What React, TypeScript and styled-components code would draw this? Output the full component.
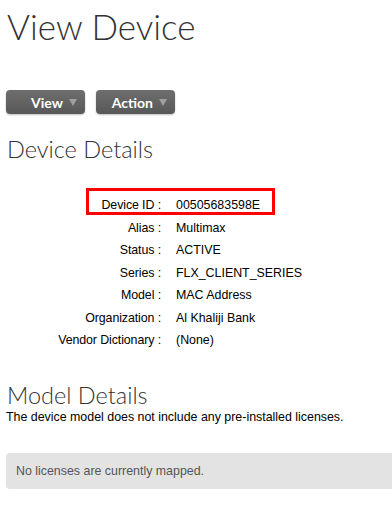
import React from 'react'
import styled, { createGlobalStyle } from 'styled-components'

const GlobalStyle = createGlobalStyle`
  html, body {
    margin: 0;
    padding: 0;
    background: #ffffff;
  }
  body {
    font-family: 'Liberation Sans', Arial, sans-serif;
    font-size: 12.4px;
    color: #000;
  }
`

const Page = styled.div`
  width: 392px;
  height: 507px;
  overflow: hidden;
  padding: 0 0 0 6px;
  box-sizing: border-box;
`

const PageTitle = styled.h1`
  margin: 0;
  padding: 4px 0 0 1px;
  font-family: Lato, sans-serif;
  font-weight: 300;
  font-size: 35px;
  line-height: 44px;
  color: #333;
`

const Toolbar = styled.div`
  display: flex;
  gap: 11px;
  margin-top: 42px;
`

const MenuButton = styled.button<{ $width: number }>`
  display: flex;
  align-items: center;
  justify-content: flex-end;
  gap: 6px;
  width: ${(p) => p.$width}px;
  height: 24px;
  padding: 0 8px 0 0;
  border: none;
  border-radius: 4px;
  background: linear-gradient(#6e6e6e, #585858);
  box-shadow: 0 1px 2px rgba(0, 0, 0, 0.25);
  color: #fff;
  font-family: Lato, sans-serif;
  font-weight: 700;
  font-size: 14px;
  cursor: pointer;
`

const Caret = styled.span`
  width: 0;
  height: 0;
  border-left: 4px solid transparent;
  border-right: 4px solid transparent;
  border-top: 7px solid #a0a0a0;
`

const SectionTitle = styled.h2<{ $top: number }>`
  margin: ${(p) => p.$top}px 0 0 1px;
  font-family: Lato, sans-serif;
  font-weight: 300;
  font-size: 23.5px;
  line-height: 30px;
  color: #333;
`

const DetailsTable = styled.div`
  position: relative;
  display: grid;
  grid-template-columns: 155px auto;
  column-gap: 15px;
  margin-top: 30px;
  line-height: 22.5px;
`

const Label = styled.div`
  text-align: right;
  white-space: nowrap;
  letter-spacing: -0.1px;
`

const Value = styled.div`
  white-space: nowrap;
`

const Highlight = styled.div`
  position: absolute;
  left: 80px;
  top: -6px;
  width: 189px;
  height: 27px;
  border: 3px solid #ff0000;
  box-sizing: border-box;
`

const Note = styled.p`
  margin: 0;
  line-height: 14px;
`

const EmptyState = styled.div`
  margin-top: 29px;
  height: 36px;
  display: flex;
  align-items: center;
  padding-left: 10px;
  background: #e3e3e3;
  border-radius: 4px 0 0 4px;
  color: #555;
`

const rows: [string, string][] = [
  ['Device ID', '00505683598E'],
  ['Alias', 'Multimax'],
  ['Status', 'ACTIVE'],
  ['Series', 'FLX_CLIENT_SERIES'],
  ['Model', 'MAC Address'],
  ['Organization', 'Al Khaliji Bank'],
  ['Vendor Dictionary', '(None)'],
]

export default function App() {
  return (
    <Page>
      <GlobalStyle />
      <PageTitle>View Device</PageTitle>

      <Toolbar>
        <MenuButton $width={79}>
          View <Caret />
        </MenuButton>
        <MenuButton $width={79}>
          Action <Caret />
        </MenuButton>
      </Toolbar>

      <SectionTitle $top={20}>Device Details</SectionTitle>

      <DetailsTable>
        <Highlight />
        {rows.map(([label, value]) => (
          <React.Fragment key={label}>
            <Label>{label} :</Label>
            <Value>{value}</Value>
          </React.Fragment>
        ))}
      </DetailsTable>

      <SectionTitle $top={28}>Model Details</SectionTitle>
      <Note>The device model does not include any pre-installed licenses.</Note>

      <EmptyState>No licenses are currently mapped.</EmptyState>
    </Page>
  )
}
